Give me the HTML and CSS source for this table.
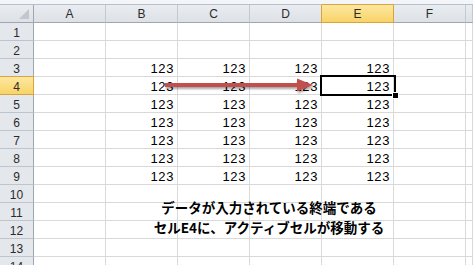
FILE: index.html
```html
<!DOCTYPE html>
<html lang="ja">
<head>
  <meta charset="UTF-8">
  <title>Sheet1</title>
  <link rel="stylesheet" href="styles.css">
</head>
<body>
  <div class="toolbar-edge"></div>
  <div class="sheet">
    <div class="grid">
      <div class="hd corner"><span class="tri"></span></div><div class="hd col">A</div><div class="hd col">B</div><div class="hd col">C</div><div class="hd col">D</div><div class="hd col sel">E</div><div class="hd col">F</div><div class="hd col"></div>
      <div class="rh">1</div><div class="c"></div><div class="c"></div><div class="c"></div><div class="c"></div><div class="c"></div><div class="c"></div><div class="c"></div>
      <div class="rh">2</div><div class="c"></div><div class="c"></div><div class="c"></div><div class="c"></div><div class="c"></div><div class="c"></div><div class="c"></div>
      <div class="rh">3</div><div class="c"></div><div class="c">123</div><div class="c">123</div><div class="c">123</div><div class="c">123</div><div class="c"></div><div class="c"></div>
      <div class="rh sel">4</div><div class="c"></div><div class="c">123</div><div class="c">123</div><div class="c">123</div><div class="c">123</div><div class="c"></div><div class="c"></div>
      <div class="rh">5</div><div class="c"></div><div class="c">123</div><div class="c">123</div><div class="c">123</div><div class="c">123</div><div class="c"></div><div class="c"></div>
      <div class="rh">6</div><div class="c"></div><div class="c">123</div><div class="c">123</div><div class="c">123</div><div class="c">123</div><div class="c"></div><div class="c"></div>
      <div class="rh">7</div><div class="c"></div><div class="c">123</div><div class="c">123</div><div class="c">123</div><div class="c">123</div><div class="c"></div><div class="c"></div>
      <div class="rh">8</div><div class="c"></div><div class="c">123</div><div class="c">123</div><div class="c">123</div><div class="c">123</div><div class="c"></div><div class="c"></div>
      <div class="rh">9</div><div class="c"></div><div class="c">123</div><div class="c">123</div><div class="c">123</div><div class="c">123</div><div class="c"></div><div class="c"></div>
      <div class="rh">10</div><div class="c"></div><div class="c"></div><div class="c"></div><div class="c"></div><div class="c"></div><div class="c"></div><div class="c"></div>
      <div class="rh">11</div><div class="c"></div><div class="c"></div><div class="c"></div><div class="c"></div><div class="c"></div><div class="c"></div><div class="c"></div>
      <div class="rh">12</div><div class="c"></div><div class="c"></div><div class="c"></div><div class="c"></div><div class="c"></div><div class="c"></div><div class="c"></div>
      <div class="rh">13</div><div class="c"></div><div class="c"></div><div class="c"></div><div class="c"></div><div class="c"></div><div class="c"></div><div class="c"></div>
      <div class="rh">14</div><div class="c"></div><div class="c"></div><div class="c"></div><div class="c"></div><div class="c"></div><div class="c"></div><div class="c"></div>
    </div>

    <!-- active cell E4 -->
    <div class="active"><span class="handle"></span></div>

    <!-- arrow from B4 to D4 -->
    <svg class="arrow" width="473" height="265" viewBox="0 0 473 265">
      <defs>
        <filter id="shade" x="-10%" y="-50%" width="120%" height="200%">
          <feDropShadow dx="1" dy="2" stdDeviation="1.2" flood-color="#000" flood-opacity="0.35"/>
        </filter>
      </defs>
      <g filter="url(#shade)" fill="#c0504d">
        <rect x="165" y="78" width="134" height="4"/>
        <polygon points="297,73.5 313,80 297,86.5"/>
      </g>
    </svg>

    <div class="note">
      データが入力されている終端である<br>
      セルE4に、アクティブセルが移動する
    </div>
  </div>
</body>
</html>
```

FILE: styles.css
```css
body {
  margin: 0;
  width: 473px;
  height: 265px;
  overflow: hidden;
  background: #fff;
  font-family: "Liberation Sans", Arial, sans-serif;
}

.toolbar-edge {
  height: 4px;
  background: #f3f5f8;
  border-bottom: 1px solid #b6bfcc;
}

.sheet {
  position: relative;
}

.grid {
  display: grid;
  grid-template-columns: 34px repeat(6, 72px) 1fr;
  grid-auto-rows: 18px;
}

.grid > div {
  box-sizing: border-box;
}

/* column headers */
.hd {
  background: linear-gradient(#e9ecf0, #dde1e6);
  border-right: 1px solid #c3c9d1;
  border-bottom: 1px solid #9ea6b1;
  color: #2b2b2b;
  font-size: 12px;
  line-height: 17px;
  text-align: center;
  padding-top: 1px;
}

.hd.corner {
  position: relative;
  border-right-color: #9ea6b1;
}

.corner .tri {
  position: absolute;
  right: 4px;
  bottom: 3px;
  width: 0;
  height: 0;
  border-left: 10px solid transparent;
  border-bottom: 10px solid #c2c7cd;
}

.hd.sel {
  background: linear-gradient(#fde7a0, #f8d468);
  border-right-color: #d9a43a;
  border-bottom-color: #d9a43a;
  box-shadow: -1px 0 0 #d9a43a, 0 -1px 0 #d9a43a;
}

/* row headers */
.rh {
  background: #e4e7eb;
  border-right: 1px solid #9ea6b1;
  border-bottom: 1px solid #bec4cc;
  color: #2b2b2b;
  font-size: 12px;
  line-height: 17px;
  padding-top: 2px;
  text-align: center;
}

.rh.sel {
  background: linear-gradient(#fde7a0, #f8d468);
  border-right-color: #d9a43a;
  border-bottom-color: #d9a43a;
  box-shadow: 0 -1px 0 #d9a43a;
}

/* cells */
.c {
  border-right: 1px solid #d9d9d9;
  border-bottom: 1px solid #d9d9d9;
  font-size: 13px;
  letter-spacing: 0.6px;
  line-height: 19px;
  text-align: right;
  padding-right: 3px;
  color: #000;
}

.active {
  position: absolute;
  left: 320px;
  top: 70px;
  width: 76px;
  height: 21px;
  box-sizing: border-box;
  border: 2px solid #000;
}

.handle {
  position: absolute;
  right: -5px;
  bottom: -5px;
  width: 5px;
  height: 5px;
  background: #000;
  border: 1px solid #fff;
}

.arrow {
  position: absolute;
  left: 0;
  top: 5px;
  margin-top: -5px;
}

.note {
  position: absolute;
  left: 149px;
  top: 193px;
  width: 240px;
  text-align: center;
  font-family: "Noto Sans CJK JP", sans-serif;
  font-weight: 700;
  font-size: 13.5px;
  line-height: 19.5px;
  color: #000;
}
```
